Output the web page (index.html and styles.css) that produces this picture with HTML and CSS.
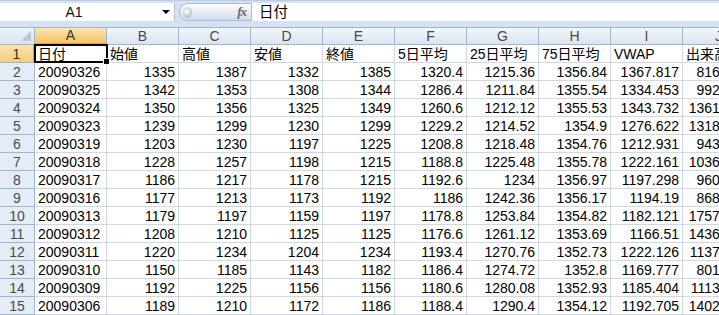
FILE: index.html
```html
<!DOCTYPE html>
<html lang="ja">
<head>
<meta charset="utf-8">
<title>Sheet</title>
<link rel="stylesheet" href="styles.css">
</head>
<body>
<div class="formula-bar">
  <div class="namebox"><span class="name">A1</span><span class="arrow"></span></div>
  <div class="fxbtn"><span class="knob"></span><span class="fx">fx</span></div>
  <div class="formula">日付</div>
</div>
<div class="sheet">
  <div class="corner"><span class="tri"></span></div>
  <div class="ch sel">A</div><div class="ch">B</div><div class="ch">C</div><div class="ch">D</div><div class="ch">E</div><div class="ch">F</div><div class="ch">G</div><div class="ch">H</div><div class="ch">I</div><div class="ch">J</div>

  <div class="rh sel">1</div><div class="c t active">日付</div><div class="c t">始値</div><div class="c t">高値</div><div class="c t">安値</div><div class="c t">終値</div><div class="c t">5日平均</div><div class="c t">25日平均</div><div class="c t">75日平均</div><div class="c t">VWAP</div><div class="c t">出来高</div>
  <div class="rh">2</div><div class="c t">20090326</div><div class="c">1335</div><div class="c">1387</div><div class="c">1332</div><div class="c">1385</div><div class="c">1320.4</div><div class="c">1215.36</div><div class="c">1356.84</div><div class="c">1367.817</div><div class="c j">8163000</div>
  <div class="rh">3</div><div class="c t">20090325</div><div class="c">1342</div><div class="c">1353</div><div class="c">1308</div><div class="c">1344</div><div class="c">1286.4</div><div class="c">1211.84</div><div class="c">1355.54</div><div class="c">1334.453</div><div class="c j">9925000</div>
  <div class="rh">4</div><div class="c t">20090324</div><div class="c">1350</div><div class="c">1356</div><div class="c">1325</div><div class="c">1349</div><div class="c">1260.6</div><div class="c">1212.12</div><div class="c">1355.53</div><div class="c">1343.732</div><div class="c j">13614000</div>
  <div class="rh">5</div><div class="c t">20090323</div><div class="c">1239</div><div class="c">1299</div><div class="c">1230</div><div class="c">1299</div><div class="c">1229.2</div><div class="c">1214.52</div><div class="c">1354.9</div><div class="c">1276.622</div><div class="c j">13183000</div>
  <div class="rh">6</div><div class="c t">20090319</div><div class="c">1203</div><div class="c">1230</div><div class="c">1197</div><div class="c">1225</div><div class="c">1208.8</div><div class="c">1218.48</div><div class="c">1354.76</div><div class="c">1212.931</div><div class="c j">9438000</div>
  <div class="rh">7</div><div class="c t">20090318</div><div class="c">1228</div><div class="c">1257</div><div class="c">1198</div><div class="c">1215</div><div class="c">1188.8</div><div class="c">1225.48</div><div class="c">1355.78</div><div class="c">1222.161</div><div class="c j">10362000</div>
  <div class="rh">8</div><div class="c t">20090317</div><div class="c">1186</div><div class="c">1217</div><div class="c">1178</div><div class="c">1215</div><div class="c">1192.6</div><div class="c">1234</div><div class="c">1356.97</div><div class="c">1197.298</div><div class="c j">9601000</div>
  <div class="rh">9</div><div class="c t">20090316</div><div class="c">1177</div><div class="c">1213</div><div class="c">1173</div><div class="c">1192</div><div class="c">1186</div><div class="c">1242.36</div><div class="c">1356.17</div><div class="c">1194.19</div><div class="c j">8686000</div>
  <div class="rh">10</div><div class="c t">20090313</div><div class="c">1179</div><div class="c">1197</div><div class="c">1159</div><div class="c">1197</div><div class="c">1178.8</div><div class="c">1253.84</div><div class="c">1354.82</div><div class="c">1182.121</div><div class="c j">17574000</div>
  <div class="rh">11</div><div class="c t">20090312</div><div class="c">1208</div><div class="c">1210</div><div class="c">1125</div><div class="c">1125</div><div class="c">1176.6</div><div class="c">1261.12</div><div class="c">1353.69</div><div class="c">1166.51</div><div class="c j">14367000</div>
  <div class="rh">12</div><div class="c t">20090311</div><div class="c">1220</div><div class="c">1234</div><div class="c">1204</div><div class="c">1234</div><div class="c">1193.4</div><div class="c">1270.76</div><div class="c">1352.73</div><div class="c">1222.126</div><div class="c j">11379000</div>
  <div class="rh">13</div><div class="c t">20090310</div><div class="c">1150</div><div class="c">1185</div><div class="c">1143</div><div class="c">1182</div><div class="c">1186.4</div><div class="c">1274.72</div><div class="c">1352.8</div><div class="c">1169.777</div><div class="c j">8012000</div>
  <div class="rh">14</div><div class="c t">20090309</div><div class="c">1192</div><div class="c">1225</div><div class="c">1156</div><div class="c">1156</div><div class="c">1180.6</div><div class="c">1280.08</div><div class="c">1352.93</div><div class="c">1185.404</div><div class="c j">11135000</div>
  <div class="rh">15</div><div class="c t">20090306</div><div class="c">1189</div><div class="c">1210</div><div class="c">1172</div><div class="c">1186</div><div class="c">1188.4</div><div class="c">1290.4</div><div class="c">1354.12</div><div class="c">1192.705</div><div class="c j">14028000</div>
</div>
</body>
</html>
```

FILE: styles.css
```css
html, body {
  margin: 0;
  padding: 0;
  overflow: hidden;
  background: #ffffff;
}
body {
  width: 719px;
  height: 315px;
  font-family: "Liberation Sans", "Noto Sans CJK JP", sans-serif;
  font-size: 14px;
  color: #000;
}
.formula-bar {
  display: flex;
  align-items: stretch;
  height: 18px;
  padding: 2px 0 6px 0;
  background: #d6e2f1;
  border-top: 1px solid #b9cbe2;
  border-bottom: 1px solid #9fb5d2;
  box-sizing: content-box;
}
.namebox {
  width: 174px;
  background: #fff;
  border-right: 1px solid #b4c6dd;
  display: flex;
  align-items: center;
  position: relative;
}
.name {
  flex: 1;
  text-align: center;
  font-size: 14px;
  padding-right: 14px;
  color: #111;
}
.arrow {
  width: 0;
  height: 0;
  border-left: 4px solid transparent;
  border-right: 4px solid transparent;
  border-top: 4px solid #000;
  margin-right: 4px;
}
.fxbtn {
  margin-left: 4px;
  width: 72px;
  height: 18px;
  box-sizing: border-box;
  border: 1px solid #a9bbd3;
  border-right: none;
  border-radius: 9px 0 0 9px;
  background: linear-gradient(#ffffff, #e3ebf5 55%, #cfdcec);
  display: flex;
  align-items: center;
  justify-content: space-between;
  padding: 0 5px 0 3px;
}
.knob {
  width: 9px;
  height: 11px;
  border-radius: 50%;
  background: radial-gradient(circle at 40% 40%, #ffffff, #c4cbd4 60%, #9aa4b1);
}
.fx {
  font-family: "Liberation Serif", serif;
  font-style: italic;
  font-weight: bold;
  font-size: 13px;
  color: #6a6a6a;
  letter-spacing: -1px;
}
.formula {
  flex: 1;
  background: #fff;
  border-left: 1px solid #a9bbd3;
  padding-left: 7px;
  font-size: 14.5px;
  line-height: 18px;
}
.sheet {
  display: grid;
  grid-template-columns: 35px repeat(10, 72px);
  grid-template-rows: 17px;
  grid-auto-rows: 18px;
  width: 755px;
}
.corner {
  background: linear-gradient(#eef3f9, #dbe4ef);
  border-right: 1px solid #9eb6ce;
  border-bottom: 1px solid #9eb6ce;
  position: relative;
}
.tri {
  position: absolute;
  right: 3px;
  bottom: 3px;
  width: 0;
  height: 0;
  border-left: 10px solid transparent;
  border-bottom: 10px solid #b6c7dc;
}
.ch {
  background: linear-gradient(#f4f7fb, #e6edf6 50%, #dbe4ef);
  border-right: 1px solid #9eb6ce;
  border-bottom: 1px solid #9eb6ce;
  text-align: center;
  line-height: 16px;
  color: #4a4a4a;
  font-size: 14px;
}
.ch.sel {
  background: linear-gradient(#fbe3b1, #f8d48b 50%, #f3c466);
  border-bottom: 2px solid #f29436;
  line-height: 15px;
  color: #333;
}
.rh {
  background: #e4ecf7;
  border-right: 1px solid #9eb6ce;
  border-bottom: 1px solid #9eb6ce;
  text-align: center;
  line-height: 18px;
  color: #4a4a4a;
  font-size: 14px;
}
.rh.sel {
  background: linear-gradient(#fbe3b1, #f6cd7a);
  border-right: 2px solid #f29436;
  color: #333;
}
.c {
  border-right: 1px solid #d0d7e5;
  border-bottom: 1px solid #d0d7e5;
  line-height: 18px;
  text-align: right;
  padding: 0 3px;
  white-space: nowrap;
  box-sizing: border-box;
  overflow: visible;
}
.c.t {
  text-align: left;
}
.c.j {
  padding-right: 3px;
}
.active {
  position: relative;
}
.active::after {
  content: "";
  position: absolute;
  left: -1px;
  top: -1px;
  right: -2px;
  bottom: -1px;
  border: 2px solid #000;
  pointer-events: none;
}
.active::before {
  content: "";
  position: absolute;
  right: -4px;
  bottom: -3px;
  width: 5px;
  height: 5px;
  background: #000;
  border: 1px solid #fff;
  z-index: 2;
}
```
